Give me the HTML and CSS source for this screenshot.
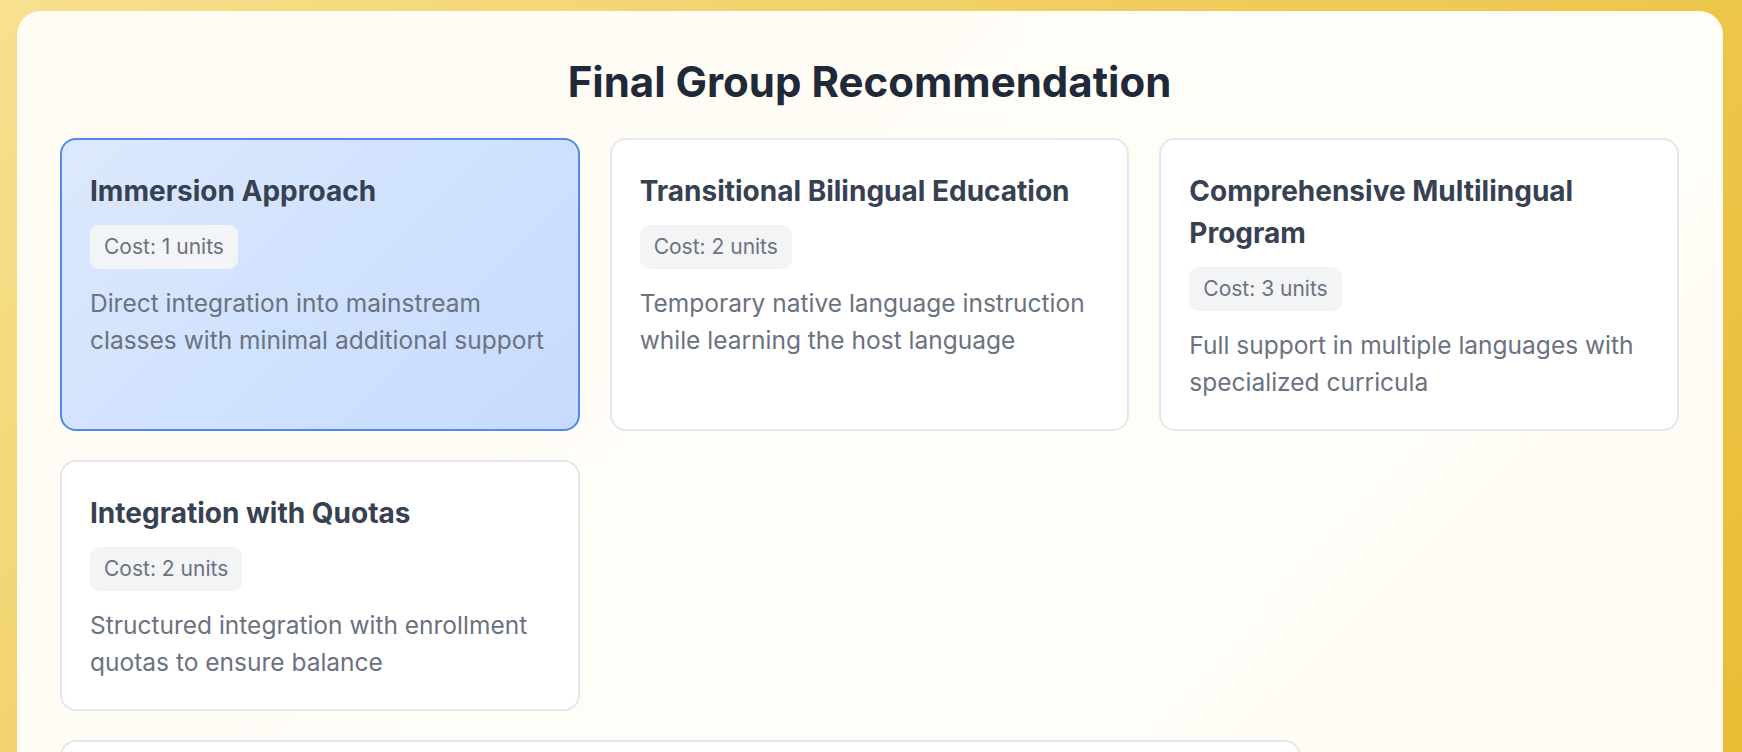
FILE: index.html
```html
<!DOCTYPE html>
<html lang="en">
<head>
<meta charset="utf-8">
<title>Final Group Recommendation</title>
<link rel="stylesheet" href="styles.css">
</head>
<body>
  <main class="panel">
    <h1 class="panel-title">Final Group Recommendation</h1>
    <div class="options">
      <div class="option selected">
        <h3 class="option-title">Immersion Approach</h3>
        <span class="cost">Cost: 1 units</span>
        <p class="option-desc">Direct integration into mainstream classes with minimal additional support</p>
      </div>
      <div class="option">
        <h3 class="option-title">Transitional Bilingual Education</h3>
        <span class="cost">Cost: 2 units</span>
        <p class="option-desc">Temporary native language instruction while learning the host language</p>
      </div>
      <div class="option">
        <h3 class="option-title">Comprehensive Multilingual Program</h3>
        <span class="cost">Cost: 3 units</span>
        <p class="option-desc">Full support in multiple languages with specialized curricula</p>
      </div>
      <div class="option">
        <h3 class="option-title">Integration with Quotas</h3>
        <span class="cost">Cost: 2 units</span>
        <p class="option-desc">Structured integration with enrollment quotas to ensure balance</p>
      </div>
    </div>
    <div class="summary"></div>
  </main>
</body>
</html>
```

FILE: styles.css
```css
* { box-sizing: border-box; }

html, body {
  height: 100%;
}

body {
  margin: 0;
  padding: 11px 19px 0 17px;
  font-family: Inter, "Noto Sans", sans-serif;
  line-height: 1.6;
  background: linear-gradient(135deg, #f7e08f 0%, #efcb5a 50%, #e9bd35 100%);
  overflow: hidden;
}

.panel {
  background: linear-gradient(135deg, #fffcf4 0%, #fffdf8 60%, #fffcf3 100%);
  border-radius: 24px;
  padding: 46px 44px 40px 43px;
  min-height: 900px;
}

.panel-title {
  margin: 0 0 31px;
  text-align: center;
  font-size: 42px;
  line-height: 1.2;
  font-weight: 700;
  color: #1f2937;
}

.options {
  display: grid;
  grid-template-columns: repeat(3, 1fr);
  gap: 29px 30px;
}

.option {
  background: #ffffff;
  border: 2px solid #e5e7eb;
  border-radius: 16px;
  padding: 30px 28px 28px;
  display: flex;
  flex-direction: column;
  align-items: flex-start;
}

.option.selected {
  background: linear-gradient(135deg, #dce9fe 0%, #c6dbfd 100%);
  border-color: #5289f0;
}

.option-title {
  margin: 0 0 13px;
  font-size: 28px;
  font-weight: 700;
  color: #374151;
  line-height: 1.5;
}

.cost {
  display: inline-block;
  background: #f3f4f6;
  color: #6b7280;
  font-size: 21px;
  line-height: 1.5;
  padding: 6px 14px;
  border-radius: 9px;
  margin-bottom: 16px;
}

.option-desc {
  margin: 0;
  font-size: 24.5px;
  line-height: 1.52;
  color: #6b7280;
}

.summary {
  margin-top: 29px;
  width: 1241px;
  height: 120px;
  background: #ffffff;
  border: 2px solid #e5e7eb;
  border-radius: 16px;
}
```
